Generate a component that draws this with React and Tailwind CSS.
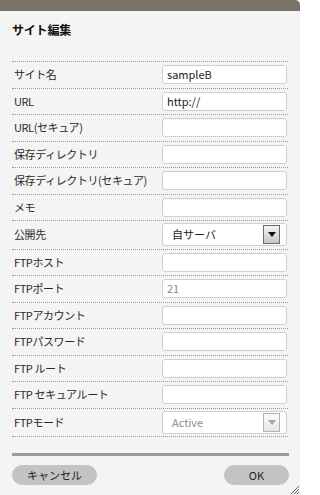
import React from "react";

const font = { fontFamily: '"Noto Sans CJK JP", "Noto Sans", sans-serif' };

function Input({ value, muted }) {
  return (
    <div className="w-[125px] h-[19px] bg-white border border-[#cfcfcf] rounded-[3px] flex items-center pl-[4px] text-[11px] leading-none">
      <span className={muted ? "text-[#8a8a8a]" : "text-[#222]"}>{value}</span>
    </div>
  );
}

function Select({ value, disabled }) {
  return (
    <div className="w-[125px] h-[23px] bg-white border border-[#cfcfcf] rounded-[3px] flex items-center pl-[9px] pr-[6px] text-[11px] leading-none">
      <span className={"flex-1 " + (disabled ? "text-[#8a8a8a]" : "text-[#222]")}>{value}</span>
      <div
        className={
          "w-[17px] h-[19px] flex items-center justify-center border bg-gradient-to-b " +
          (disabled
            ? "border-[#b4b4b4] from-[#fafafa] to-[#e6e6e6]"
            : "border-[#6a6a6a] from-[#f4f4f4] to-[#c6c6c6]")
        }
      >
        <svg width="8" height="5" viewBox="0 0 8 5">
          <polygon points="0,0 8,0 4,5" fill={disabled ? "#a8a8a8" : "#111"} />
        </svg>
      </div>
    </div>
  );
}

const rows = [
  { label: "サイト名", kind: "input", value: "sampleB" },
  { label: "URL", kind: "input", value: "http://" },
  { label: "URL(セキュア)", kind: "input", value: "" },
  { label: "保存ディレクトリ", kind: "input", value: "" },
  { label: "保存ディレクトリ(セキュア)", kind: "input", value: "" },
  { label: "メモ", kind: "input", value: "" },
  { label: "公開先", kind: "select", value: "自サーバ" },
  { label: "FTPホスト", kind: "input", value: "" },
  { label: "FTPポート", kind: "input", value: "21", muted: true },
  { label: "FTPアカウント", kind: "input", value: "" },
  { label: "FTPパスワード", kind: "input", value: "" },
  { label: "FTP ルート", kind: "input", value: "" },
  { label: "FTP セキュアルート", kind: "input", value: "" },
  { label: "FTPモード", kind: "select", value: "Active", disabled: true },
];

export default function App() {
  return (
    <div className="relative w-[300px] h-[495px] bg-[#f4f4f4] flex flex-col overflow-hidden" style={font}>
      <div className="h-[11px] bg-[#7a7169] rounded-tr-[5px] shrink-0" />
      <div className="px-[12px] flex flex-col">
        <div className="pt-[12px] text-[12px] leading-[14px] tracking-[-0.2px] font-bold text-[#111]">サイト編集</div>
        <div className="mt-[24px] border-t border-dotted border-[#9a9a9a]">
          {rows.map((r) => (
            <div
              key={r.label}
              className={
                "flex items-center border-b border-dotted border-[#9a9a9a] " +
                (r.kind === "select" ? "h-[28.5px]" : "h-[26.5px]")
              }
            >
              <div className="w-[150px] pl-[2px] text-[11px] leading-none tracking-[-0.4px] text-[#2a2a2a] whitespace-nowrap">{r.label}</div>
              {r.kind === "input" ? (
                <Input value={r.value} muted={r.muted} />
              ) : (
                <Select value={r.value} disabled={r.disabled} />
              )}
            </div>
          ))}
        </div>
        <div className="mt-[16px] h-[3px] bg-[#9c9c9c] mr-[-1px]" />
        <div className="mt-[9px] flex justify-between">
          <button className="w-[85px] h-[20px] rounded-full bg-[#c3c3c3] text-[11px] leading-none text-[#222] flex items-center justify-center">
            キャンセル
          </button>
          <button className="w-[65px] h-[20px] rounded-full bg-[#c3c3c3] text-[11px] leading-none text-[#222] flex items-center justify-center mr-[-1px]">
            OK
          </button>
        </div>
      </div>
      <svg className="absolute right-[1px] bottom-[1px]" width="9" height="9" viewBox="0 0 9 9">
        <line x1="9" y1="1" x2="1" y2="9" stroke="#666" strokeWidth="1" />
        <line x1="9" y1="4" x2="4" y2="9" stroke="#666" strokeWidth="1" />
        <line x1="9" y1="7" x2="7" y2="9" stroke="#666" strokeWidth="1" />
      </svg>
    </div>
  );
}
